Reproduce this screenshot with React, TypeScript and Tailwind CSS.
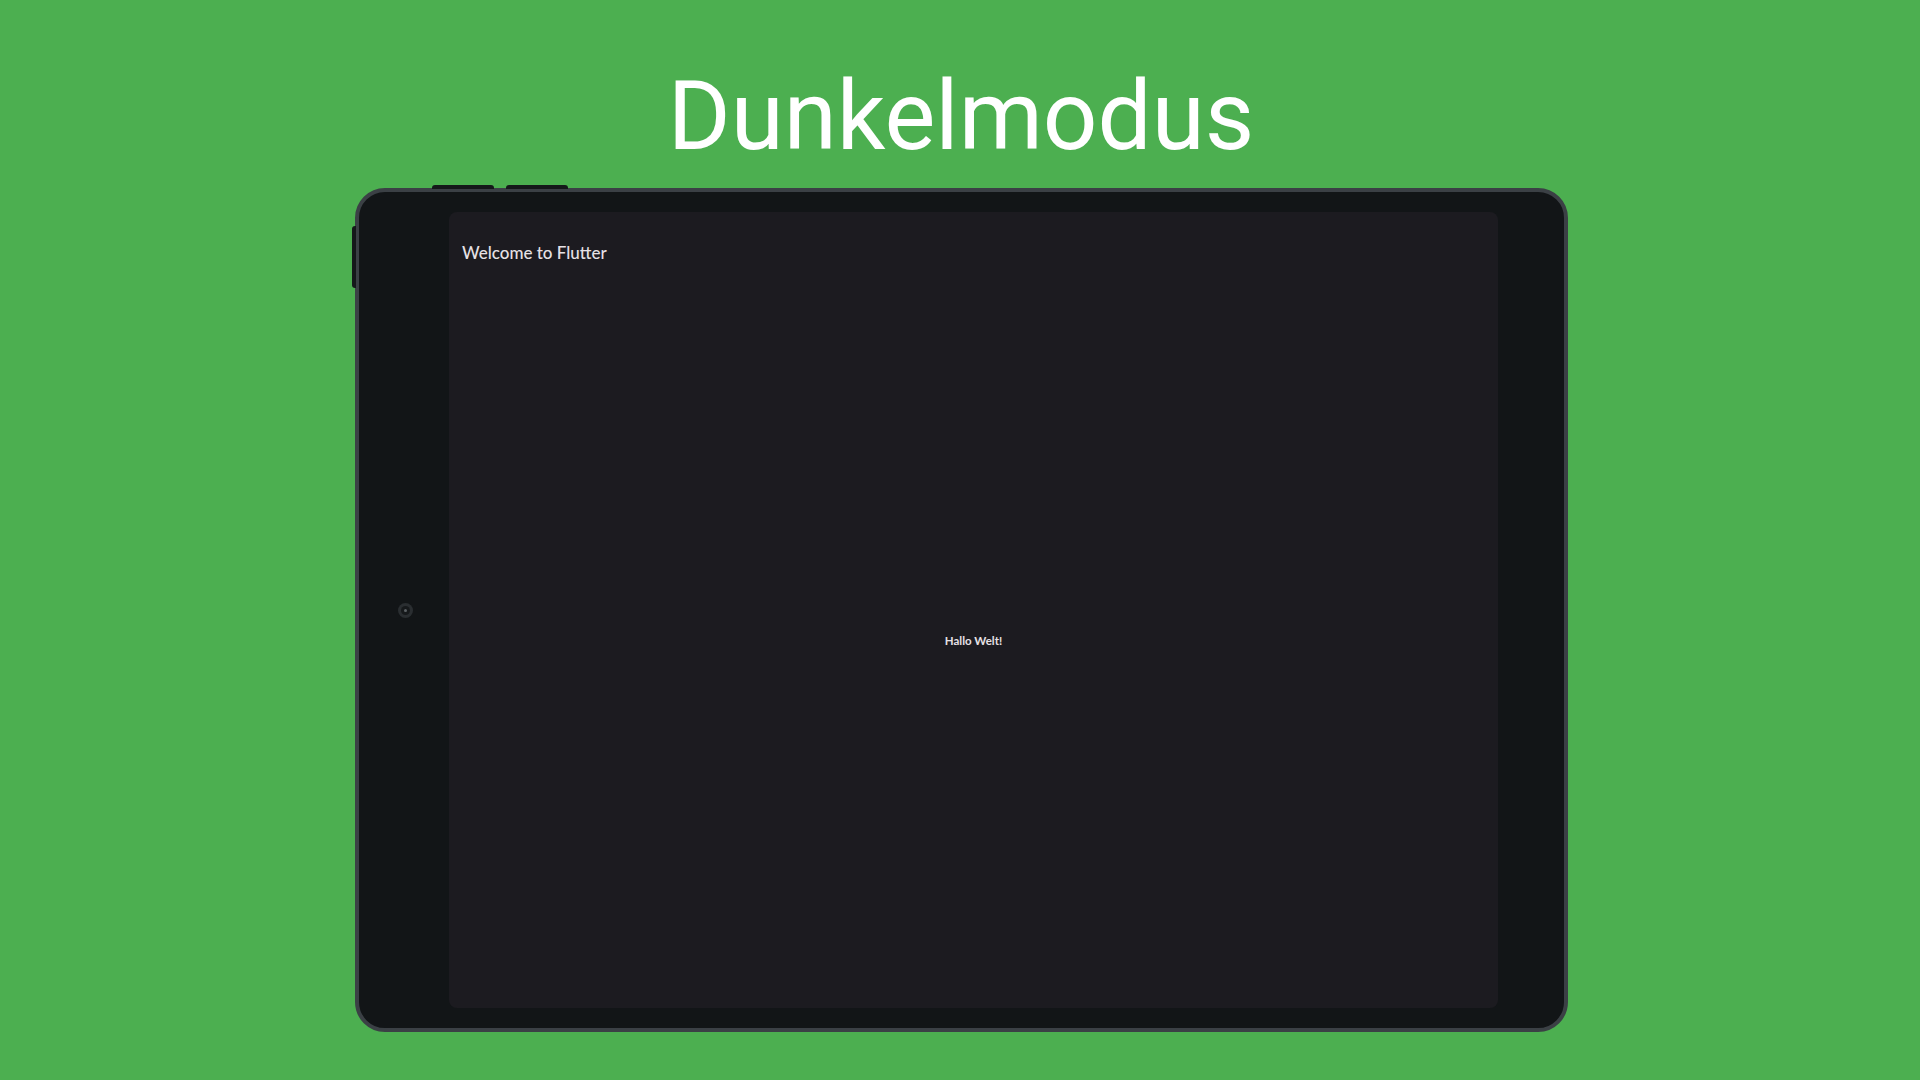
export default function App() {
  return (
    <div className="min-h-screen w-full bg-[#4caf50] flex flex-col items-center overflow-hidden">
      <h1 className="pt-[60px] text-[96px] leading-[112px] text-white font-normal font-['Roboto',sans-serif] pl-[2px]">
        Dunkelmodus
      </h1>

      <div className="mt-[16px] pl-[3px]">
        <div className="relative w-[1213px] h-[844px] rounded-[30px] border-4 border-[#3b4045] bg-[#121517] flex py-[20px]">
          {/* hardware buttons */}
          <div className="absolute -top-[7px] left-[73px] w-[62px] h-[4px] rounded-t-[3px] bg-[#15181a]" />
          <div className="absolute -top-[7px] left-[147px] w-[62px] h-[4px] rounded-t-[3px] bg-[#15181a]" />
          <div className="absolute -left-[7px] top-[34px] w-[4px] h-[62px] rounded-l-[3px] bg-[#15181a]" />

          <div className="w-[92px] flex items-center justify-center">
            <div className="w-[15px] h-[15px] rounded-full bg-[#2a2e31] flex items-center justify-center">
              <div className="w-[9px] h-[9px] rounded-full bg-[#16191b] flex items-center justify-center">
                <div className="w-[3px] h-[3px] rounded-full bg-[#5c6165]" />
              </div>
            </div>
          </div>

          <div className="flex-1 rounded-[8px] bg-[#1c1b20] flex flex-col font-['Lato',sans-serif] text-[#e6e1e5] -ml-[2px]">
            <div className="h-[61px] pt-[30px] pl-[13px]">
              <span className="text-[17px] leading-[22px] block font-medium">Welcome to Flutter</span>
            </div>
            <div className="flex-1 flex items-center justify-center">
              <span className="text-[11.5px] font-bold">Hallo Welt!</span>
            </div>
          </div>

          <div className="w-[66px]" />
        </div>
      </div>
    </div>
  );
}
